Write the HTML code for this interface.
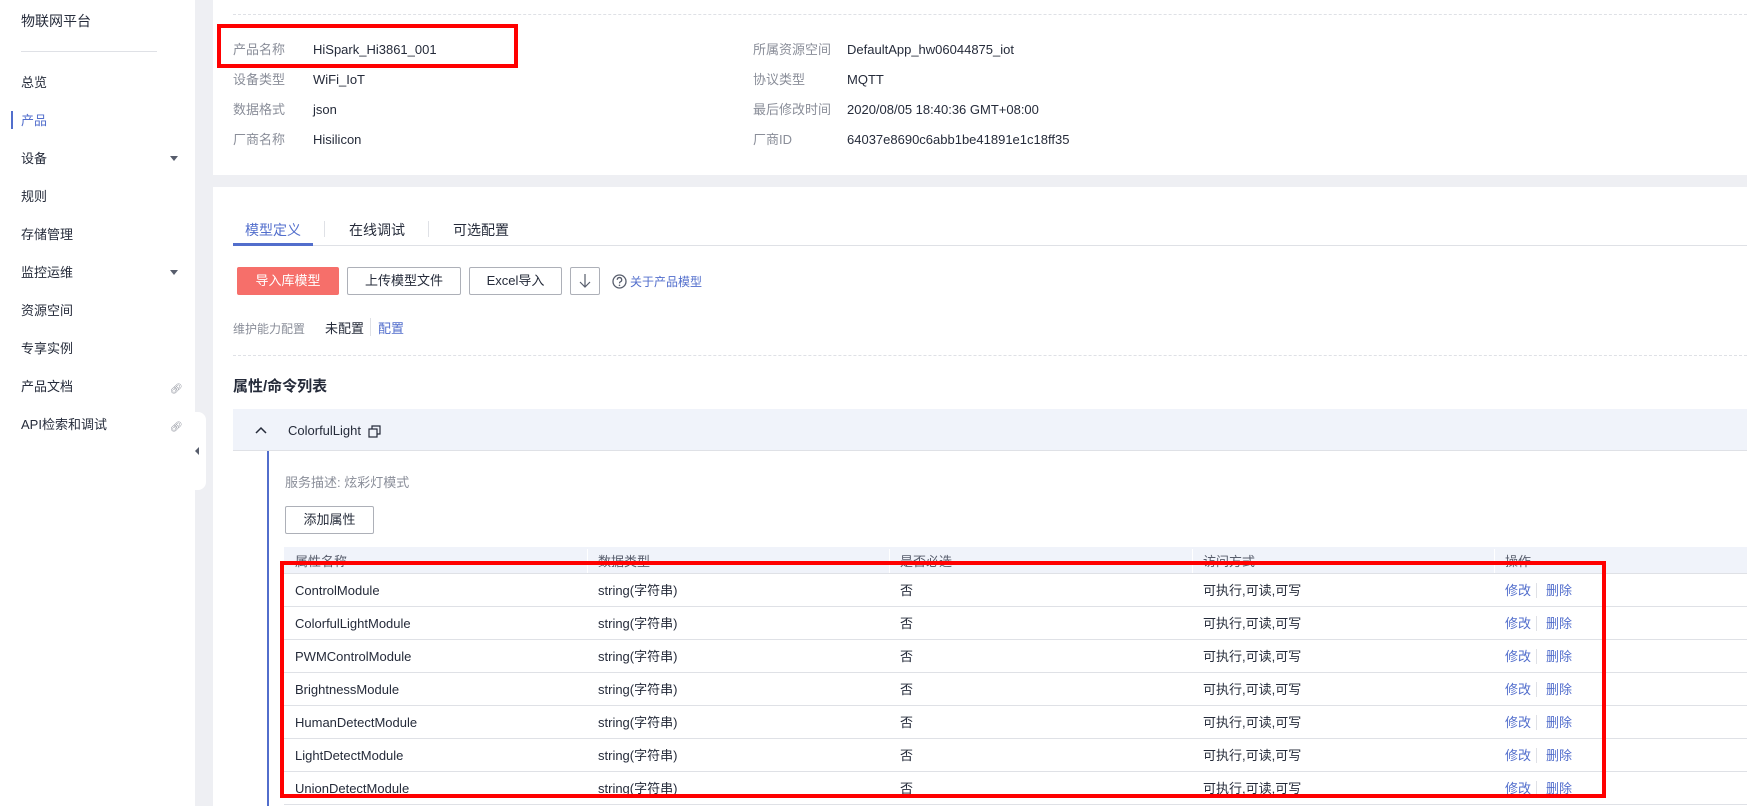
<!DOCTYPE html>
<html><head><meta charset="utf-8"><style>
*{box-sizing:border-box;margin:0;padding:0}
body{width:1747px;height:806px;overflow:hidden;background:#eeeff3;font-family:"Liberation Sans","Noto Sans CJK SC",sans-serif;font-size:13px;line-height:18px;color:#252b3a;position:relative}
.a{position:absolute;white-space:nowrap}
.side{position:absolute;left:0;top:0;width:195px;height:806px;background:#fff}
.card{position:absolute;left:213px;background:#fff;right:0}
.lbl{color:#8a8e99}
.btn{position:absolute;height:28px;border:1px solid #adb0b8;border-radius:2px;background:#fff;text-align:center;line-height:26px;font-size:13px}
.blue{color:#526ecc}
.row{position:absolute;left:284px;right:0;height:33px;border-bottom:1px solid #dfe1e6}
.row span{position:absolute;top:8px}
</style></head><body>
<div class="side">
<div class="a" style="left:21px;top:12px;font-size:14px">物联网平台</div>
<div class="a" style="left:21px;top:51px;width:136px;height:1px;background:#dfe1e6"></div>
<div class="a" style="left:21px;top:74px">总览</div>
<div class="a" style="left:11px;top:111px;width:2px;height:18px;background:#526ecc"></div>
<div class="a blue" style="left:21px;top:112px">产品</div>
<div class="a" style="left:21px;top:150px">设备</div>
<div class="a" style="left:170px;top:156px;border:4px solid transparent;border-top:5px solid #575d6c"></div>
<div class="a" style="left:21px;top:188px">规则</div>
<div class="a" style="left:21px;top:226px">存储管理</div>
<div class="a" style="left:21px;top:264px">监控运维</div>
<div class="a" style="left:170px;top:270px;border:4px solid transparent;border-top:5px solid #575d6c"></div>
<div class="a" style="left:21px;top:302px">资源空间</div>
<div class="a" style="left:21px;top:340px">专享实例</div>
<div class="a" style="left:21px;top:378px">产品文档</div>
<div class="a" style="left:170px;top:381px;font-size:10px;color:#8a8e99">&#x1F517;&#xFE0E;</div>
<div class="a" style="left:21px;top:416px">API检索和调试</div>
<div class="a" style="left:170px;top:419px;font-size:10px;color:#8a8e99">&#x1F517;&#xFE0E;</div>
</div>
<div class="a" style="left:193px;top:412px;width:13px;height:78px;background:#fff;border-radius:0 8px 8px 0"></div>
<div class="a" style="left:195px;top:447px;border:4px solid transparent;border-right:4px solid #575d6c;border-left:0"></div>

<div class="card" style="top:0;height:175px">
<div class="a" style="left:20px;right:0;top:14px;border-top:1px dashed #dfe1e6"></div>
<div class="a lbl" style="left:20px;top:41px">产品名称</div><div class="a" style="left:100px;top:41px">HiSpark_Hi3861_001</div>
<div class="a lbl" style="left:20px;top:71px">设备类型</div><div class="a" style="left:100px;top:71px">WiFi_IoT</div>
<div class="a lbl" style="left:20px;top:101px">数据格式</div><div class="a" style="left:100px;top:101px">json</div>
<div class="a lbl" style="left:20px;top:131px">厂商名称</div><div class="a" style="left:100px;top:131px">Hisilicon</div>
<div class="a lbl" style="left:540px;top:41px">所属资源空间</div><div class="a" style="left:634px;top:41px">DefaultApp_hw06044875_iot</div>
<div class="a lbl" style="left:540px;top:71px">协议类型</div><div class="a" style="left:634px;top:71px">MQTT</div>
<div class="a lbl" style="left:540px;top:101px">最后修改时间</div><div class="a" style="left:634px;top:101px">2020/08/05 18:40:36 GMT+08:00</div>
<div class="a lbl" style="left:540px;top:131px">厂商ID</div><div class="a" style="left:634px;top:131px">64037e8690c6abb1be41891e1c18ff35</div>
</div>
<div class="a" style="left:217px;top:24px;width:301px;height:44px;border:4px solid #f00"></div>

<div class="card" style="top:187px;height:619px">
<div class="a" style="left:20px;right:0;top:58px;height:1px;background:#dfe1e6"></div>
<div class="a blue" style="left:32px;top:34px;font-size:14px">模型定义</div>
<div class="a" style="left:20px;top:56px;width:80px;height:3px;background:#526ecc"></div>
<div class="a" style="left:111px;top:34px;width:1px;height:16px;background:#dfe1e6"></div>
<div class="a" style="left:136px;top:34px;font-size:14px">在线调试</div>
<div class="a" style="left:215px;top:34px;width:1px;height:16px;background:#dfe1e6"></div>
<div class="a" style="left:240px;top:34px;font-size:14px">可选配置</div>
</div>
<div class="btn" style="left:237px;top:267px;width:102px;background:#f66f6a;border-color:#f66f6a;color:#fff">导入库模型</div>
<div class="btn" style="left:347px;top:267px;width:114px">上传模型文件</div>
<div class="btn" style="left:469px;top:267px;width:93px">Excel导入</div>
<div class="btn" style="left:570px;top:267px;width:30px"><svg width="14" height="16" viewBox="0 0 14 16" style="margin-top:5px"><path d="M7 1v13M2 9l5 5 5-5" stroke="#575d6c" fill="none" stroke-width="1.2"/></svg></div>
<svg class="a" style="left:612px;top:274px" width="15" height="15" viewBox="0 0 15 15"><circle cx="7.5" cy="7.5" r="6.5" stroke="#575d6c" fill="none" stroke-width="1.3"/><path d="M5.3 5.8a2.2 2.2 0 1 1 3 2c-.7.3-.8.8-.8 1.6" stroke="#575d6c" fill="none" stroke-width="1.3"/><circle cx="7.5" cy="11.3" r=".8" fill="#575d6c"/></svg>
<div class="a blue" style="left:630px;top:273px;font-size:12px">关于产品模型</div>
<div class="a lbl" style="left:233px;top:320px;font-size:12px">维护能力配置</div>
<div class="a" style="left:325px;top:320px">未配置</div>
<div class="a" style="left:370px;top:318px;width:1px;height:18px;background:#dfe1e6"></div>
<div class="a blue" style="left:378px;top:320px">配置</div>
<div class="a" style="left:233px;right:0;top:355px;border-top:1px dashed #dfe1e6"></div>
<div class="a" style="left:233px;top:378px;font-size:15px;font-weight:bold">属性/命令列表</div>
<div class="a" style="left:233px;right:0;top:409px;height:42px;background:#f0f3fa;border-bottom:1px solid #dfe1e6"></div>
<svg class="a" style="left:255px;top:426px" width="12" height="8" viewBox="0 0 12 8"><path d="M1 7l5-5 5 5" stroke="#252b3a" fill="none" stroke-width="1.5"/></svg>
<div class="a" style="left:288px;top:422px;font-size:13px">ColorfulLight</div>
<svg class="a" style="left:368px;top:425px" width="13" height="13" viewBox="0 0 13 13"><rect x="1" y="4" width="8" height="8" fill="none" stroke="#252b3a" stroke-width="1.2"/><path d="M4 4V1h8v8H9" fill="none" stroke="#252b3a" stroke-width="1.2"/></svg>
<div class="a" style="left:267px;top:451px;width:2px;height:355px;background:#526ecc"></div>
<div class="a lbl" style="left:285px;top:474px">服务描述: 炫彩灯模式</div>
<div class="btn" style="left:285px;top:506px;width:89px">添加属性</div>
<div class="a" style="left:284px;right:0;top:547px;height:27px;background:#f0f3fa;border-bottom:1px solid #dfe1e6"></div>
<div class="a" style="left:295px;top:553px;color:#575d6c">属性名称</div>
<div class="a" style="left:598px;top:553px;color:#575d6c">数据类型</div>
<div class="a" style="left:900px;top:553px;color:#575d6c">是否必选</div>
<div class="a" style="left:1203px;top:553px;color:#575d6c">访问方式</div>
<div class="a" style="left:1505px;top:553px;color:#575d6c">操作</div>
<div class="a" style="left:587px;top:549px;width:1px;height:24px;background:#fff"></div>
<div class="a" style="left:889px;top:549px;width:1px;height:24px;background:#fff"></div>
<div class="a" style="left:1192px;top:549px;width:1px;height:24px;background:#fff"></div>
<div class="a" style="left:1494px;top:549px;width:1px;height:24px;background:#fff"></div>

<div class="row" style="top:574px"><span style="left:11px">ControlModule</span><span style="left:314px">string(字符串)</span><span style="left:616px">否</span><span style="left:919px">可执行,可读,可写</span><span class="blue" style="left:1221px">修改</span><span style="left:1252px;top:9px;width:1px;height:15px;background:#dfe1e6"></span><span class="blue" style="left:1262px">删除</span></div>
<div class="row" style="top:607px"><span style="left:11px">ColorfulLightModule</span><span style="left:314px">string(字符串)</span><span style="left:616px">否</span><span style="left:919px">可执行,可读,可写</span><span class="blue" style="left:1221px">修改</span><span style="left:1252px;top:9px;width:1px;height:15px;background:#dfe1e6"></span><span class="blue" style="left:1262px">删除</span></div>
<div class="row" style="top:640px"><span style="left:11px">PWMControlModule</span><span style="left:314px">string(字符串)</span><span style="left:616px">否</span><span style="left:919px">可执行,可读,可写</span><span class="blue" style="left:1221px">修改</span><span style="left:1252px;top:9px;width:1px;height:15px;background:#dfe1e6"></span><span class="blue" style="left:1262px">删除</span></div>
<div class="row" style="top:673px"><span style="left:11px">BrightnessModule</span><span style="left:314px">string(字符串)</span><span style="left:616px">否</span><span style="left:919px">可执行,可读,可写</span><span class="blue" style="left:1221px">修改</span><span style="left:1252px;top:9px;width:1px;height:15px;background:#dfe1e6"></span><span class="blue" style="left:1262px">删除</span></div>
<div class="row" style="top:706px"><span style="left:11px">HumanDetectModule</span><span style="left:314px">string(字符串)</span><span style="left:616px">否</span><span style="left:919px">可执行,可读,可写</span><span class="blue" style="left:1221px">修改</span><span style="left:1252px;top:9px;width:1px;height:15px;background:#dfe1e6"></span><span class="blue" style="left:1262px">删除</span></div>
<div class="row" style="top:739px"><span style="left:11px">LightDetectModule</span><span style="left:314px">string(字符串)</span><span style="left:616px">否</span><span style="left:919px">可执行,可读,可写</span><span class="blue" style="left:1221px">修改</span><span style="left:1252px;top:9px;width:1px;height:15px;background:#dfe1e6"></span><span class="blue" style="left:1262px">删除</span></div>
<div class="row" style="top:772px"><span style="left:11px">UnionDetectModule</span><span style="left:314px">string(字符串)</span><span style="left:616px">否</span><span style="left:919px">可执行,可读,可写</span><span class="blue" style="left:1221px">修改</span><span style="left:1252px;top:9px;width:1px;height:15px;background:#dfe1e6"></span><span class="blue" style="left:1262px">删除</span></div>
<div class="a" style="left:280px;top:561px;width:1326px;height:237px;border:4px solid #f00"></div>
</body></html>
